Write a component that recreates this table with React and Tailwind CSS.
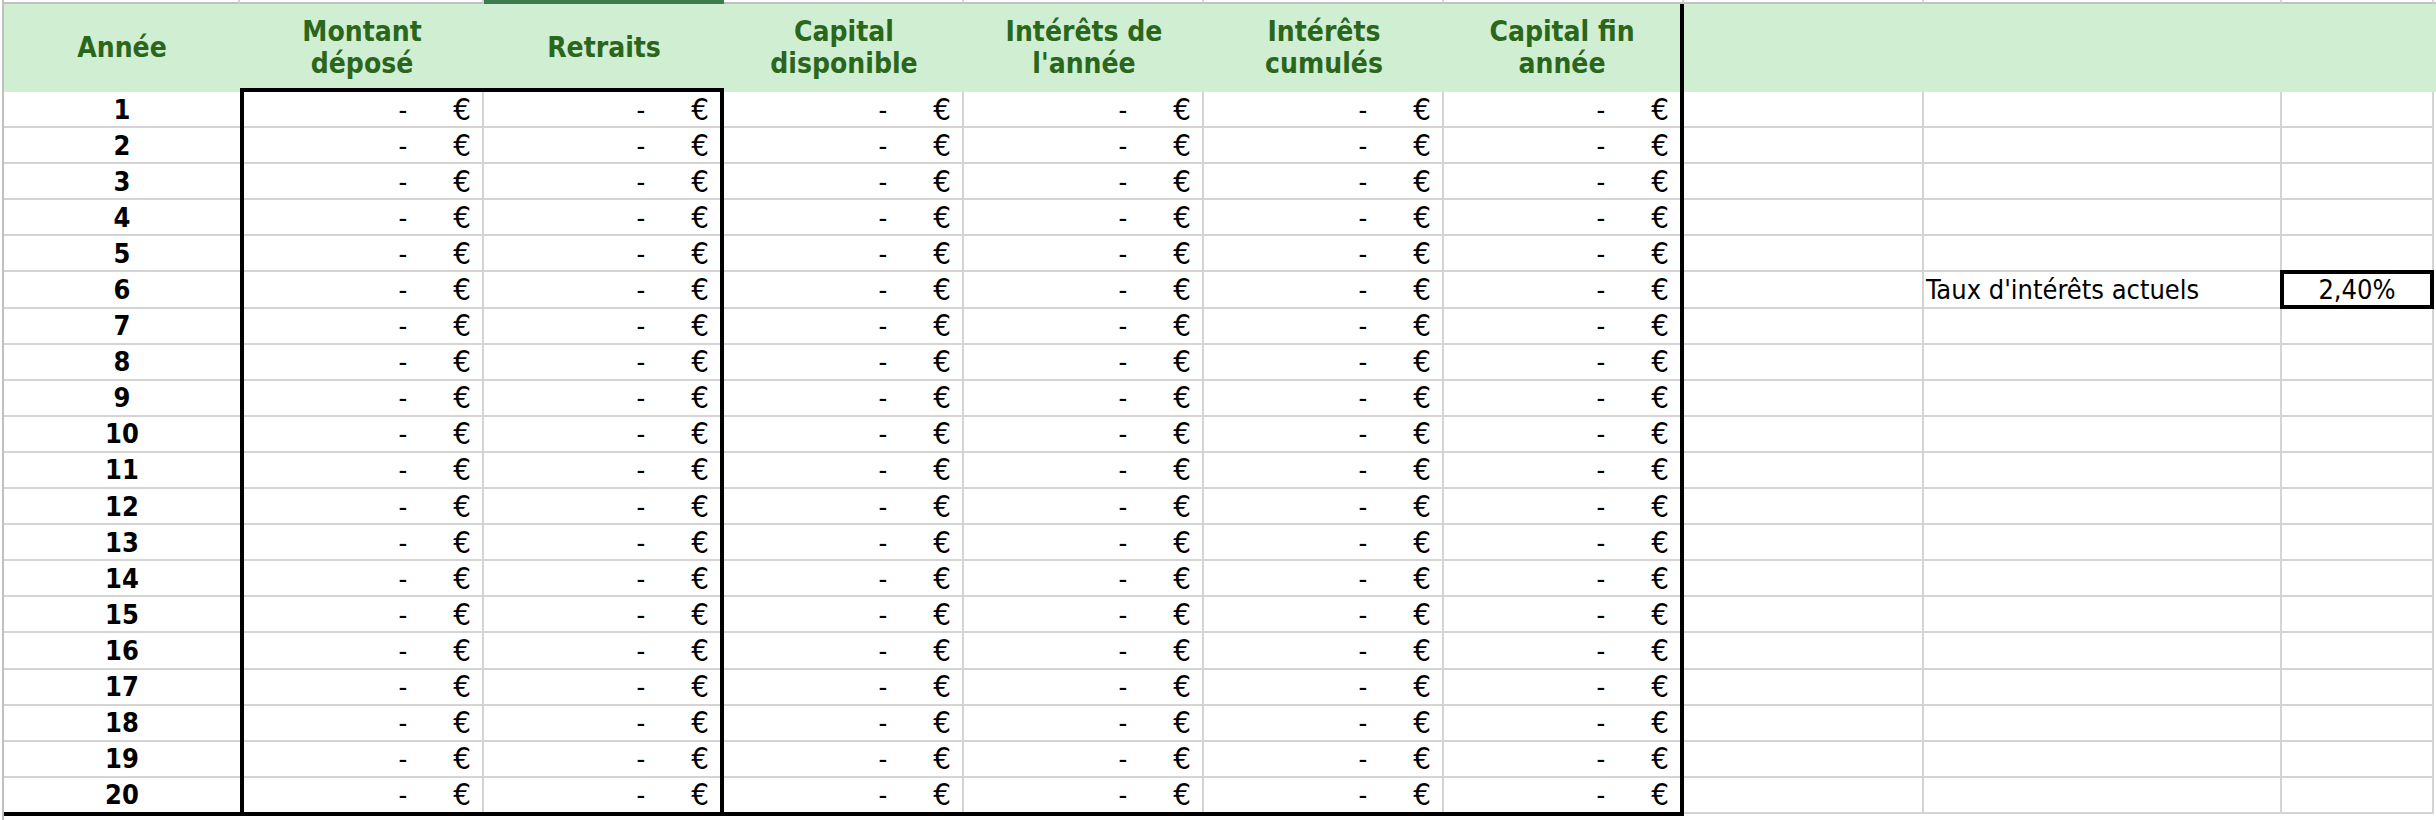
import React from "react";

const ROWS = Array.from({ length: 20 }, (_, i) => i + 1);

const HEADERS = [
  { w: "w-[236px]", label: ["Année"] },
  { w: "w-[244px]", label: ["Montant", "déposé"] },
  { w: "w-[240px]", label: ["Retraits"] },
  { w: "w-[240px]", label: ["Capital", "disponible"] },
  { w: "w-[240px]", label: ["Intérêts de", "l'année"] },
  { w: "w-[240px]", label: ["Intérêts", "cumulés"] },
  { w: "w-[240px] border-r-4 border-black", label: ["Capital fin", "année"] },
];

function Money() {
  return (
    <div className="flex h-full items-center justify-end pr-[11px] text-[27px] leading-none">
      <span className="mr-[46px]">-</span>
      <span className="text-[31px]">€</span>
    </div>
  );
}

function Year({ n }) {
  return (
    <div className="flex h-full items-center justify-center text-[27px] font-bold leading-none">
      {n}
    </div>
  );
}

// one spreadsheet column; "closed" columns end on the black bottom border of the table
function DataCol({ className = "", closed = false, render }) {
  return (
    <div className={`flex flex-col ${className}`}>
      {ROWS.map((n, i) => {
        const last = i === ROWS.length - 1;
        return (
          <div
            key={n}
            className={last && closed ? "h-[34.1px]" : "h-[36.1px] border-b-2 border-b-[#d4d4d4]"}
          >
            {render ? render(n) : null}
          </div>
        );
      })}
    </div>
  );
}

export default function App() {
  return (
    <div className="w-[2436px] h-[820px] overflow-hidden bg-white text-black font-['DejaVu_Sans_Condensed','DejaVu_Sans',sans-serif] font-stretch-condensed">
      <div className="ml-[2px] h-full border-l-2 border-[#c0c0c0]">
        {/* column letters strip (cut off) */}
        <div className="flex h-[4px]">
          <div className="w-[236px] border-r-2 border-b-2 border-r-[#d4d4d4] border-b-[#c0c0c0]" />
          <div className="w-[244px] border-r-2 border-b-2 border-r-[#d4d4d4] border-b-[#c0c0c0]" />
          <div className="w-[240px] bg-[#3d7a4d]" />
          <div className="w-[240px] border-r-2 border-b-2 border-r-[#d4d4d4] border-b-[#c0c0c0]" />
          <div className="w-[240px] border-r-2 border-b-2 border-r-[#d4d4d4] border-b-[#c0c0c0]" />
          <div className="w-[240px] border-r-2 border-b-2 border-r-[#d4d4d4] border-b-[#c0c0c0]" />
          <div className="w-[240px] border-r-2 border-b-2 border-r-[#d4d4d4] border-b-[#c0c0c0]" />
          <div className="w-[240px] border-r-2 border-b-2 border-r-[#d4d4d4] border-b-[#c0c0c0]" />
          <div className="w-[358px] border-r-2 border-b-2 border-r-[#d4d4d4] border-b-[#c0c0c0]" />
          <div className="w-[152px] border-r-2 border-b-2 border-r-[#d4d4d4] border-b-[#c0c0c0]" />
          <div className="flex-1 border-b-2 border-b-[#c0c0c0]" />
        </div>

        {/* header row */}
        <div className="flex h-[88px] bg-[#d0eed1] text-[#2a661c] text-[28px] font-bold leading-[32px]">
          {HEADERS.map((h, i) => (
            <div key={i} className={`flex items-center justify-center text-center ${h.w}`}>
              <div>
                {h.label.map((line, j) => (
                  <div key={j}>{line}</div>
                ))}
              </div>
            </div>
          ))}
          <div className="flex-1" />
        </div>

        {/* data */}
        <div className="flex items-start">
          <div className="flex border-b-4 border-black">
            <DataCol className="w-[236px]" closed render={(n) => <Year n={n} />} />
            <div className="-mt-[4px] flex border-4 border-b-0 border-black">
              <DataCol className="w-[240px] border-r-2 border-r-[#d4d4d4]" closed render={() => <Money />} />
              <DataCol className="w-[236px]" closed render={() => <Money />} />
            </div>
            <DataCol className="w-[240px] border-r-2 border-r-[#d4d4d4]" closed render={() => <Money />} />
            <DataCol className="w-[240px] border-r-2 border-r-[#d4d4d4]" closed render={() => <Money />} />
            <DataCol className="w-[240px] border-r-2 border-r-[#d4d4d4]" closed render={() => <Money />} />
            <DataCol className="w-[240px] border-r-4 border-r-black" closed render={() => <Money />} />
          </div>
          <DataCol className="w-[240px] border-r-2 border-r-[#d4d4d4]" />
          <DataCol
            className="w-[358px] border-r-2 border-r-[#d4d4d4]"
            render={(n) =>
              n === 6 ? (
                <div className="flex h-full items-center pl-[2px] text-[27px] leading-none whitespace-nowrap">
                  Taux d'intérêts actuels
                </div>
              ) : null
            }
          />
          <div className="flex w-[152px] flex-col border-r-2 border-r-[#d4d4d4]">
            {ROWS.map((n) =>
              n === 6 ? (
                <div key={n} className="flex h-[36.1px]">
                  <div className="-ml-[2px] -mt-[2px] flex h-[38.1px] w-[154px] shrink-0 items-center justify-center border-4 border-black text-[27px] leading-none">
                    2,40%
                  </div>
                </div>
              ) : (
                <div key={n} className="h-[36.1px] border-b-2 border-b-[#d4d4d4]" />
              )
            )}
          </div>
        </div>
      </div>
    </div>
  );
}
